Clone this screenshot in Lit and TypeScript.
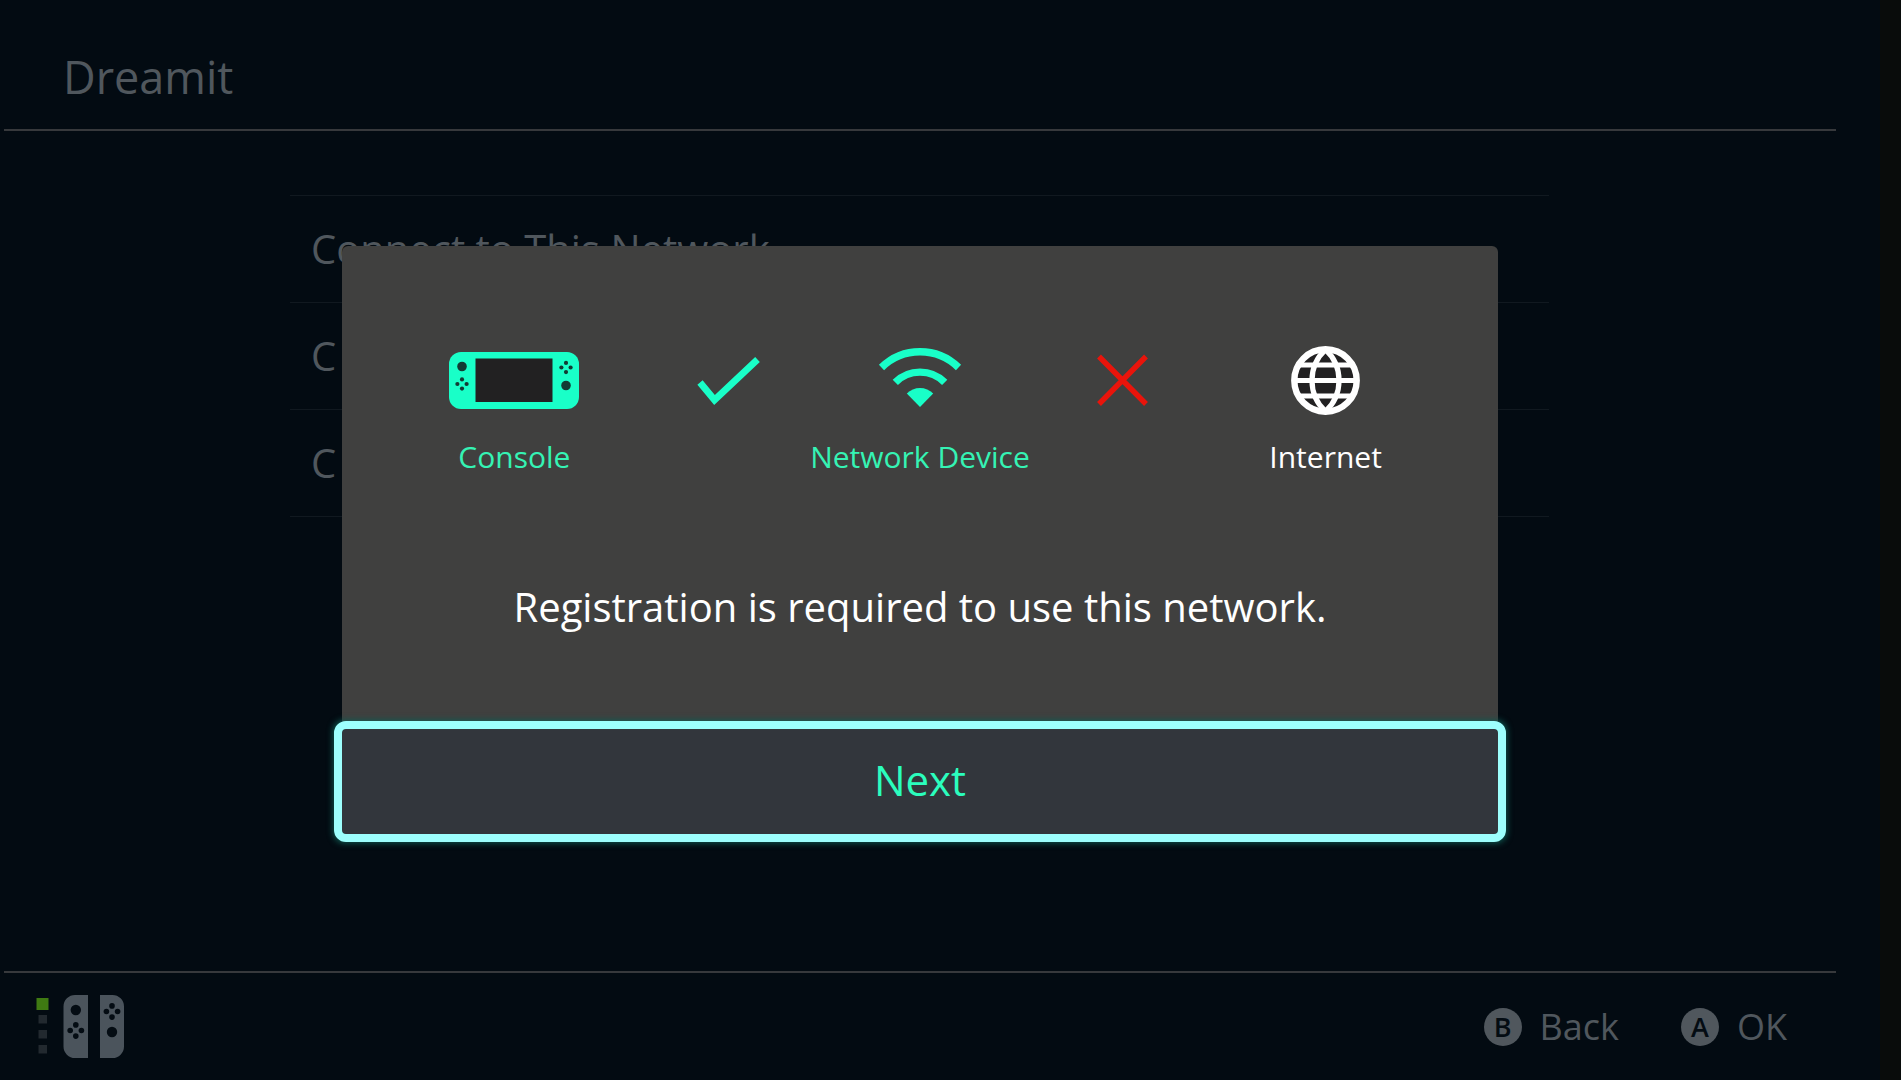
import { LitElement, html, css, svg } from "lit";
import { customElement } from "lit/decorators.js";

/* Four face buttons arranged as a diamond around (x, y). */
const diamond = (x: number, y: number, d: number, r: number) => svg`
  <circle cx=${x} cy=${y - d} r=${r} />
  <circle cx=${x + d} cy=${y} r=${r} />
  <circle cx=${x} cy=${y + d} r=${r} />
  <circle cx=${x - d} cy=${y} r=${r} />`;

const consoleIcon = html`<svg class="icon" width="132" height="72" viewBox="0 0 132 72" aria-hidden="true">
  <rect x="1" y="8" width="130" height="57" rx="12" fill="#19ffc8" />
  <rect x="27.5" y="14.5" width="77" height="43.5" fill="#222122" />
  <g fill="#123b33">
    <circle cx="14" cy="22.5" r="4.8" />
    ${diamond(14, 40, 4.6, 2.1)}
    ${diamond(118, 23.5, 4.6, 2.1)}
    <circle cx="118" cy="41.5" r="4.8" />
  </g>
</svg>`;

const checkIcon = html`<svg class="icon" width="100" height="72" viewBox="0 0 100 72" aria-hidden="true">
  <path d="M33 38.5 L47.500 56 L90.5 15.500" fill="none" stroke="#19ffc8" stroke-width="6.8" />
</svg>`;

const wifiIcon = html`<svg class="icon" width="88" height="72" viewBox="0 0 88 72" aria-hidden="true">
  <g fill="none" stroke="#19ffc8" stroke-width="7.4">
    <path d="M5.5 23.5 A55 55 0 0 1 82.5 23.5" />
    <path d="M19.3 38.3 A35 35 0 0 1 68.7 38.3" />
  </g>
  <path d="M44 63 L30.8 49.5 A18.8 18.8 0 0 1 57.2 49.5 Z" fill="#19ffc8" />
</svg>`;

const crossIcon = html`<svg class="icon" width="56" height="72" viewBox="0 0 56 72" aria-hidden="true">
  <path d="M4 12.5 L51 60 M51 12.5 L4 60" fill="none" stroke="#e9140b" stroke-width="5.4" />
</svg>`;

const globeIcon = html`<svg class="icon" width="72" height="72" viewBox="0 0 72 72" aria-hidden="true">
  <g fill="none" stroke="#ffffff" stroke-width="5.2">
    <circle cx="35.5" cy="36.5" r="31.2" fill="#222122" stroke-width="6.4" />
    <path d="M35.5 5.5 A42.3 42.3 0 0 0 35.5 67.5 A42.3 42.3 0 0 0 35.5 5.5" />
    <path d="M9 21 H62 M5 36.5 H66 M9 52 H62" />
  </g>
</svg>`;

const controllerIcon = html`<svg class="pads" width="90" height="66" viewBox="0 0 90 66" role="img" aria-label="Controller 1">
  <rect x="0.5" y="4" width="12" height="12" fill="#3f7a12" />
  <g fill="#22292f">
    <rect x="2.5" y="21" width="8.5" height="8.5" />
    <rect x="2.5" y="36" width="8.5" height="8.5" />
    <rect x="2.5" y="51" width="8.5" height="8.5" />
  </g>
  <g fill="#4b545c">
    <path d="M52 1 V64 H39 A11.5 11.5 0 0 1 27.5 52.5 V12.5 A11.5 11.5 0 0 1 39 1 Z" />
    <path d="M64 1 V64 H76.5 A11.5 11.5 0 0 0 88 52.5 V12.5 A11.5 11.5 0 0 0 76.5 1 Z" />
  </g>
  <g fill="#040c13">
    <circle cx="39.8" cy="16" r="5.2" />
    ${diamond(39.8, 36.5, 5.6, 2.8)}
    ${diamond(76, 17.5, 5.6, 2.8)}
    <circle cx="76" cy="38" r="5.2" />
  </g>
</svg>`;

@customElement("app-root")
export class AppRoot extends LitElement {
  static styles = css`
    :host {
      display: block;
      font-family: "Open Sans", "Noto Sans", sans-serif;
      color: #50575d;
    }
    * {
      box-sizing: border-box;
    }
    button {
      appearance: none;
      margin: 0;
      padding: 0;
      border: 0;
      background: none;
      font: inherit;
      color: inherit;
      text-align: left;
    }
    .screen {
      position: relative;
      display: flex;
      flex-direction: column;
      min-height: 100vh;
      padding: 0 44px 0 4px;
      border-right: 21px solid #090c0b;
      background: #030b12;
    }
    .header {
      display: flex;
      align-items: center;
      height: 131px;
      padding: 24px 59px 0;
      border-bottom: 2px solid #37393c;
    }
    .title {
      margin: 0;
      font-size: 45px;
      line-height: 60px;
      font-weight: 400;
    }
    .main {
      flex: 1;
      padding: 64px 287px 0 286px;
    }
    .menu {
      margin: 0;
      padding: 0;
      list-style: none;
      border-top: 1px solid #111920;
    }
    .row {
      display: block;
      width: 100%;
      height: 107px;
      padding: 0 21px;
      border-bottom: 1px solid #111920;
      font-size: 40px;
      line-height: 52px;
    }
    .footer {
      display: flex;
      align-items: center;
      justify-content: space-between;
      height: 109px;
      padding: 0 49px 0 32px;
      border-top: 2px solid #37393c;
    }
    .pads {
      display: block;
    }
    .actions {
      display: flex;
      gap: 62px;
    }
    .action {
      display: flex;
      align-items: center;
      gap: 18px;
      font-size: 36px;
      line-height: 48px;
    }
    .key {
      display: grid;
      place-items: center;
      width: 38px;
      height: 38px;
      border-radius: 50%;
      background: #50575d;
      color: #040c13;
      font-size: 27px;
      line-height: 38px;
      font-weight: 600;
    }
    .overlay {
      position: absolute;
      inset: 0;
      display: grid;
      place-items: center;
      padding: 0 44px 0 4px;
    }
    .dialog {
      display: flex;
      flex-direction: column;
      width: 63%;
      min-width: 1156px;
      border-radius: 6px;
      background: #40403f;
      color: #ffffff;
    }
    .status {
      display: grid;
      grid-template-columns: repeat(5, 1fr);
      margin: 0;
      padding: 98px 71px 0;
      list-style: none;
    }
    .step {
      display: flex;
      flex-direction: column;
      align-items: center;
      gap: 22px;
      font-size: 30px;
      line-height: 38px;
      white-space: nowrap;
    }
    .good {
      color: #35f3b4;
    }
    .icon {
      display: block;
    }
    .caption {
      display: flex;
      justify-content: center;
      width: 0;
    }
    .message {
      margin: 0;
      padding: 105px 0 96px;
      text-align: center;
      font-size: 40px;
      line-height: 52px;
    }
    .next {
      height: 105px;
      padding-bottom: 3px;
      border-radius: 4px;
      outline: 8px solid #9dfffd;
      box-shadow: 0 0 6px 9px #0f5a52;
      background: #32363c;
      color: #2bfdbd;
      font-size: 42px;
      line-height: 56px;
      text-align: center;
    }
  `;

  render() {
    return html`
      <div class="screen">
        <header class="header"><h1 class="title">Dreamit</h1></header>
        <main class="main">
          <ul class="menu">
            ${["Connect to This Network", "C", "C"].map(
              (label) => html`<li><button class="row">${label}</button></li>`
            )}
          </ul>
        </main>
        <footer class="footer">
          ${controllerIcon}
          <div class="actions">
            <button class="action"><span class="key">B</span>Back</button>
            <button class="action"><span class="key">A</span>OK</button>
          </div>
        </footer>
        <div class="overlay">
          <section class="dialog" role="dialog" aria-modal="true" aria-labelledby="message">
            <ul class="status">
              <li class="step good">${consoleIcon}<span class="caption">Console</span></li>
              <li class="step">${checkIcon}</li>
              <li class="step good">${wifiIcon}<span class="caption">Network Device</span></li>
              <li class="step">${crossIcon}</li>
              <li class="step">${globeIcon}<span class="caption">Internet</span></li>
            </ul>
            <p class="message" id="message">Registration is required to use this network.</p>
            <button class="next">Next</button>
          </section>
        </div>
      </div>
    `;
  }
}
